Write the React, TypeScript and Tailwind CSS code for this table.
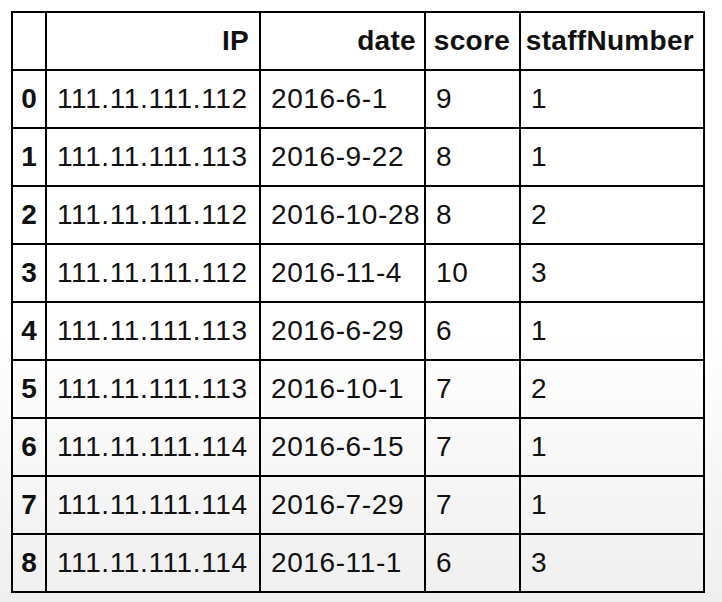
import React from "react";

const rows: [string, string, string, string, string][] = [
  ["0", "111.11.111.112", "2016-6-1", "9", "1"],
  ["1", "111.11.111.113", "2016-9-22", "8", "1"],
  ["2", "111.11.111.112", "2016-10-28", "8", "2"],
  ["3", "111.11.111.112", "2016-11-4", "10", "3"],
  ["4", "111.11.111.113", "2016-6-29", "6", "1"],
  ["5", "111.11.111.113", "2016-10-1", "7", "2"],
  ["6", "111.11.111.114", "2016-6-15", "7", "1"],
  ["7", "111.11.111.114", "2016-7-29", "7", "1"],
  ["8", "111.11.111.114", "2016-11-1", "6", "3"],
];

export default function App() {
  return (
    <div
      className="w-[722px] h-[602px] bg-[linear-gradient(to_bottom,#ffffff_0%,#ffffff_55%,#efefef_100%)] pt-[11px] pl-[11px] text-[#111]"
      style={{ fontFamily: '"Liberation Sans", Arial, sans-serif' }}
    >
      <table className="table-fixed border-collapse border-2 border-black text-[28px] leading-none">
        <colgroup>
          <col className="w-[34px]" />
          <col className="w-[214px]" />
          <col className="w-[165px]" />
          <col className="w-[95px]" />
          <col className="w-[184px]" />
        </colgroup>
        <thead>
          <tr className="h-[58px]">
            <th className="border-2 border-black"></th>
            <th className="border-2 border-black text-right pr-[10px] font-bold tracking-[0.3px]">IP</th>
            <th className="border-2 border-black text-right pr-[8px] font-bold tracking-[0.3px]">date</th>
            <th className="border-2 border-black text-right pr-[9px] font-bold tracking-[0.3px]">score</th>
            <th className="border-2 border-black text-right pr-[9px] font-bold tracking-[0.3px]">staffNumber</th>
          </tr>
        </thead>
        <tbody>
          {rows.map((r) => (
            <tr key={r[0]} className="h-[58px]">
              <th className="border-2 border-black text-center font-bold">{r[0]}</th>
              <td className="border-2 border-black text-left pl-[10px] tracking-[0.6px]">{r[1]}</td>
              <td className="border-2 border-black text-left pl-[10px] tracking-[0.6px]">{r[2]}</td>
              <td className="border-2 border-black text-left pl-[10px] tracking-[0.6px]">{r[3]}</td>
              <td className="border-2 border-black text-left pl-[10px] tracking-[0.6px]">{r[4]}</td>
            </tr>
          ))}
        </tbody>
      </table>
    </div>
  );
}
